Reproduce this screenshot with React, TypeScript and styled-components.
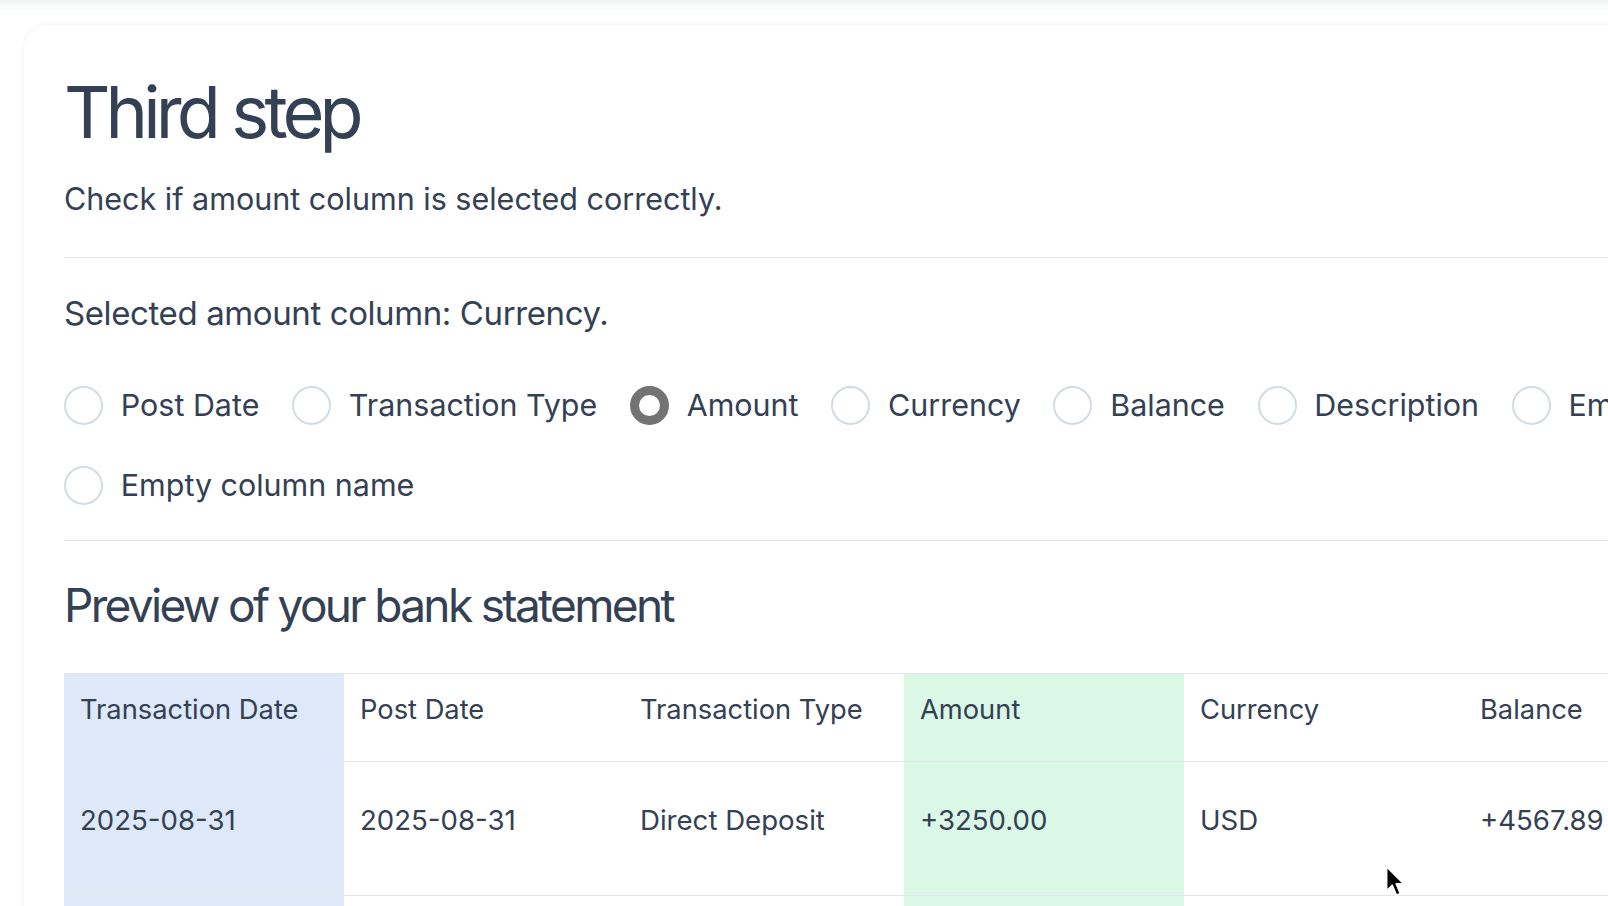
import React from "react";
import styled, { createGlobalStyle } from "styled-components";

const GlobalStyle = createGlobalStyle`
  html, body {
    margin: 0;
    padding: 0;
    background: #ffffff;
    overflow: hidden;
  }
  body {
    font-family: Inter, "Noto Sans", "Liberation Sans", sans-serif;
    color: #334155;
  }
  * { box-sizing: border-box; }
`;

const Page = styled.div`
  position: relative;
  width: 1608px;
  height: 906px;
  overflow: hidden;
  background: linear-gradient(to bottom, #f2f4f4 0px, #fafbfb 6px, #ffffff 12px);
  padding-top: 25px;
  padding-left: 24px;
`;

const Card = styled.section`
  width: 1900px;
  min-height: 900px;
  background: #ffffff;
  border-radius: 24px;
  box-shadow: 0 0 5px rgba(15, 23, 42, 0.07);
  padding: 51px 40px 0 40px;
`;

const Title = styled.h1`
  margin: 0;
  font-size: 72px;
  line-height: 72px;
  font-weight: 400;
  letter-spacing: -0.068em;
  color: #344054;
`;

const Subtitle = styled.p`
  margin: 31px 0 0 0;
  font-size: 30.5px;
  line-height: 40px;
  font-weight: 400;
  color: #344054;
`;

const Divider = styled.hr<{ $top: number }>`
  margin: ${(p) => p.$top}px 0 0 0;
  border: 0;
  height: 1px;
  width: 1820px;
  background: #e3e7ed;
`;

const Selected = styled.p`
  margin: 35px 0 0 0;
  font-size: 33px;
  line-height: 40px;
  font-weight: 400;
  letter-spacing: -0.012em;
  color: #344054;
`;

const RadioList = styled.div`
  margin-top: 52px;
  width: 1820px;
  display: flex;
  flex-wrap: wrap;
  column-gap: 32.7px;
  row-gap: 40px;
`;

const RadioItem = styled.label`
  display: flex;
  align-items: center;
  gap: 17.8px;
  height: 40px;
  font-size: 30.45px;
  line-height: 40px;
  color: #344054;
  white-space: nowrap;
`;

const RadioCircle = styled.span<{ $checked?: boolean }>`
  display: inline-block;
  width: 39px;
  height: 39px;
  border-radius: 50%;
  background: #ffffff;
  border: ${(p) => (p.$checked ? "9px solid #737373" : "2px solid #d3dbe6")};
  flex: none;
`;

const SectionTitle = styled.h2`
  margin: 36px 0 0 0;
  font-size: 46px;
  line-height: 56px;
  font-weight: 400;
  letter-spacing: -0.058em;
  color: #344054;
`;

const Table = styled.table`
  margin-top: 40px;
  border-collapse: collapse;
  table-layout: fixed;
  width: 2520px;
  border-top: 1px solid #e3e7ed;
`;

const Col = styled.col`
  width: 280px;
`;

type Tone = "date" | "amount" | undefined;

const toneBg = (t: Tone) =>
  t === "date" ? "#dde8f9" : t === "amount" ? "#dbf7e6" : "transparent";

const Th = styled.th<{ $tone?: Tone }>`
  text-align: left;
  vertical-align: top;
  font-weight: 400;
  font-size: 27.3px;
  line-height: 40px;
  padding: 16px 16px 31px 16px;
  color: #344054;
  white-space: nowrap;
  background: ${(p) => toneBg(p.$tone)};
  border-bottom: 1px solid #e3e7ed;
`;

const Td = styled.td<{ $tone?: Tone }>`
  text-align: left;
  vertical-align: top;
  font-size: 27.6px;
  line-height: 40px;
  padding: 38px 16px 55px 16px;
  color: #344054;
  white-space: nowrap;
  background: ${(p) => toneBg(p.$tone)};
  border-bottom: 1px solid #e3e7ed;
`;

const Cursor = styled.svg`
  position: absolute;
  left: 1385px;
  top: 865px;
  width: 22px;
  height: 33px;
  pointer-events: none;
`;

const radioOptions = [
  "Post Date",
  "Transaction Type",
  "Amount",
  "Currency",
  "Balance",
  "Description",
  "Empty column name",
  "Empty column name",
];

const columns: { name: string; tone?: Tone }[] = [
  { name: "Transaction Date", tone: "date" },
  { name: "Post Date" },
  { name: "Transaction Type" },
  { name: "Amount", tone: "amount" },
  { name: "Currency" },
  { name: "Balance" },
  { name: "Description" },
  { name: "" },
  { name: "" },
];

const rows: string[][] = [
  ["2025-08-31", "2025-08-31", "Direct Deposit", "+3250.00", "USD", "+4567.89", "Payroll deposit", "", ""],
  ["2025-08-30", "2025-08-30", "Card Payment", "-45.20", "USD", "+1317.89", "Grocery store", "", ""],
];

export default function App() {
  return (
    <>
      <GlobalStyle />
      <Page>
        <Card>
          <Title>Third step</Title>
          <Subtitle>Check if amount column is selected correctly.</Subtitle>
          <Divider $top={38} />
          <Selected>Selected amount column: Currency.</Selected>
          <RadioList>
            {radioOptions.map((opt, i) => (
              <RadioItem key={i}>
                <RadioCircle $checked={opt === "Amount"} />
                {opt}
              </RadioItem>
            ))}
          </RadioList>
          <Divider $top={35} />
          <SectionTitle>Preview of your bank statement</SectionTitle>
          <Table>
            <colgroup>
              {columns.map((_, i) => (
                <Col key={i} />
              ))}
            </colgroup>
            <thead>
              <tr>
                {columns.map((c, i) => (
                  <Th key={i} $tone={c.tone}>
                    {c.name}
                  </Th>
                ))}
              </tr>
            </thead>
            <tbody>
              {rows.map((r, ri) => (
                <tr key={ri}>
                  {r.map((v, ci) => (
                    <Td key={ci} $tone={columns[ci].tone}>
                      {v}
                    </Td>
                  ))}
                </tr>
              ))}
            </tbody>
          </Table>
        </Card>
        <Cursor viewBox="0 0 14 21">
          <path
            d="M1 1 L1 16.5 L4.6 13 L7.3 19.3 L9.8 18.2 L7.2 12 L12 12 Z"
            fill="#000000"
            stroke="#ffffff"
            strokeWidth="1.1"
            strokeLinejoin="round"
          />
        </Cursor>
      </Page>
    </>
  );
}
